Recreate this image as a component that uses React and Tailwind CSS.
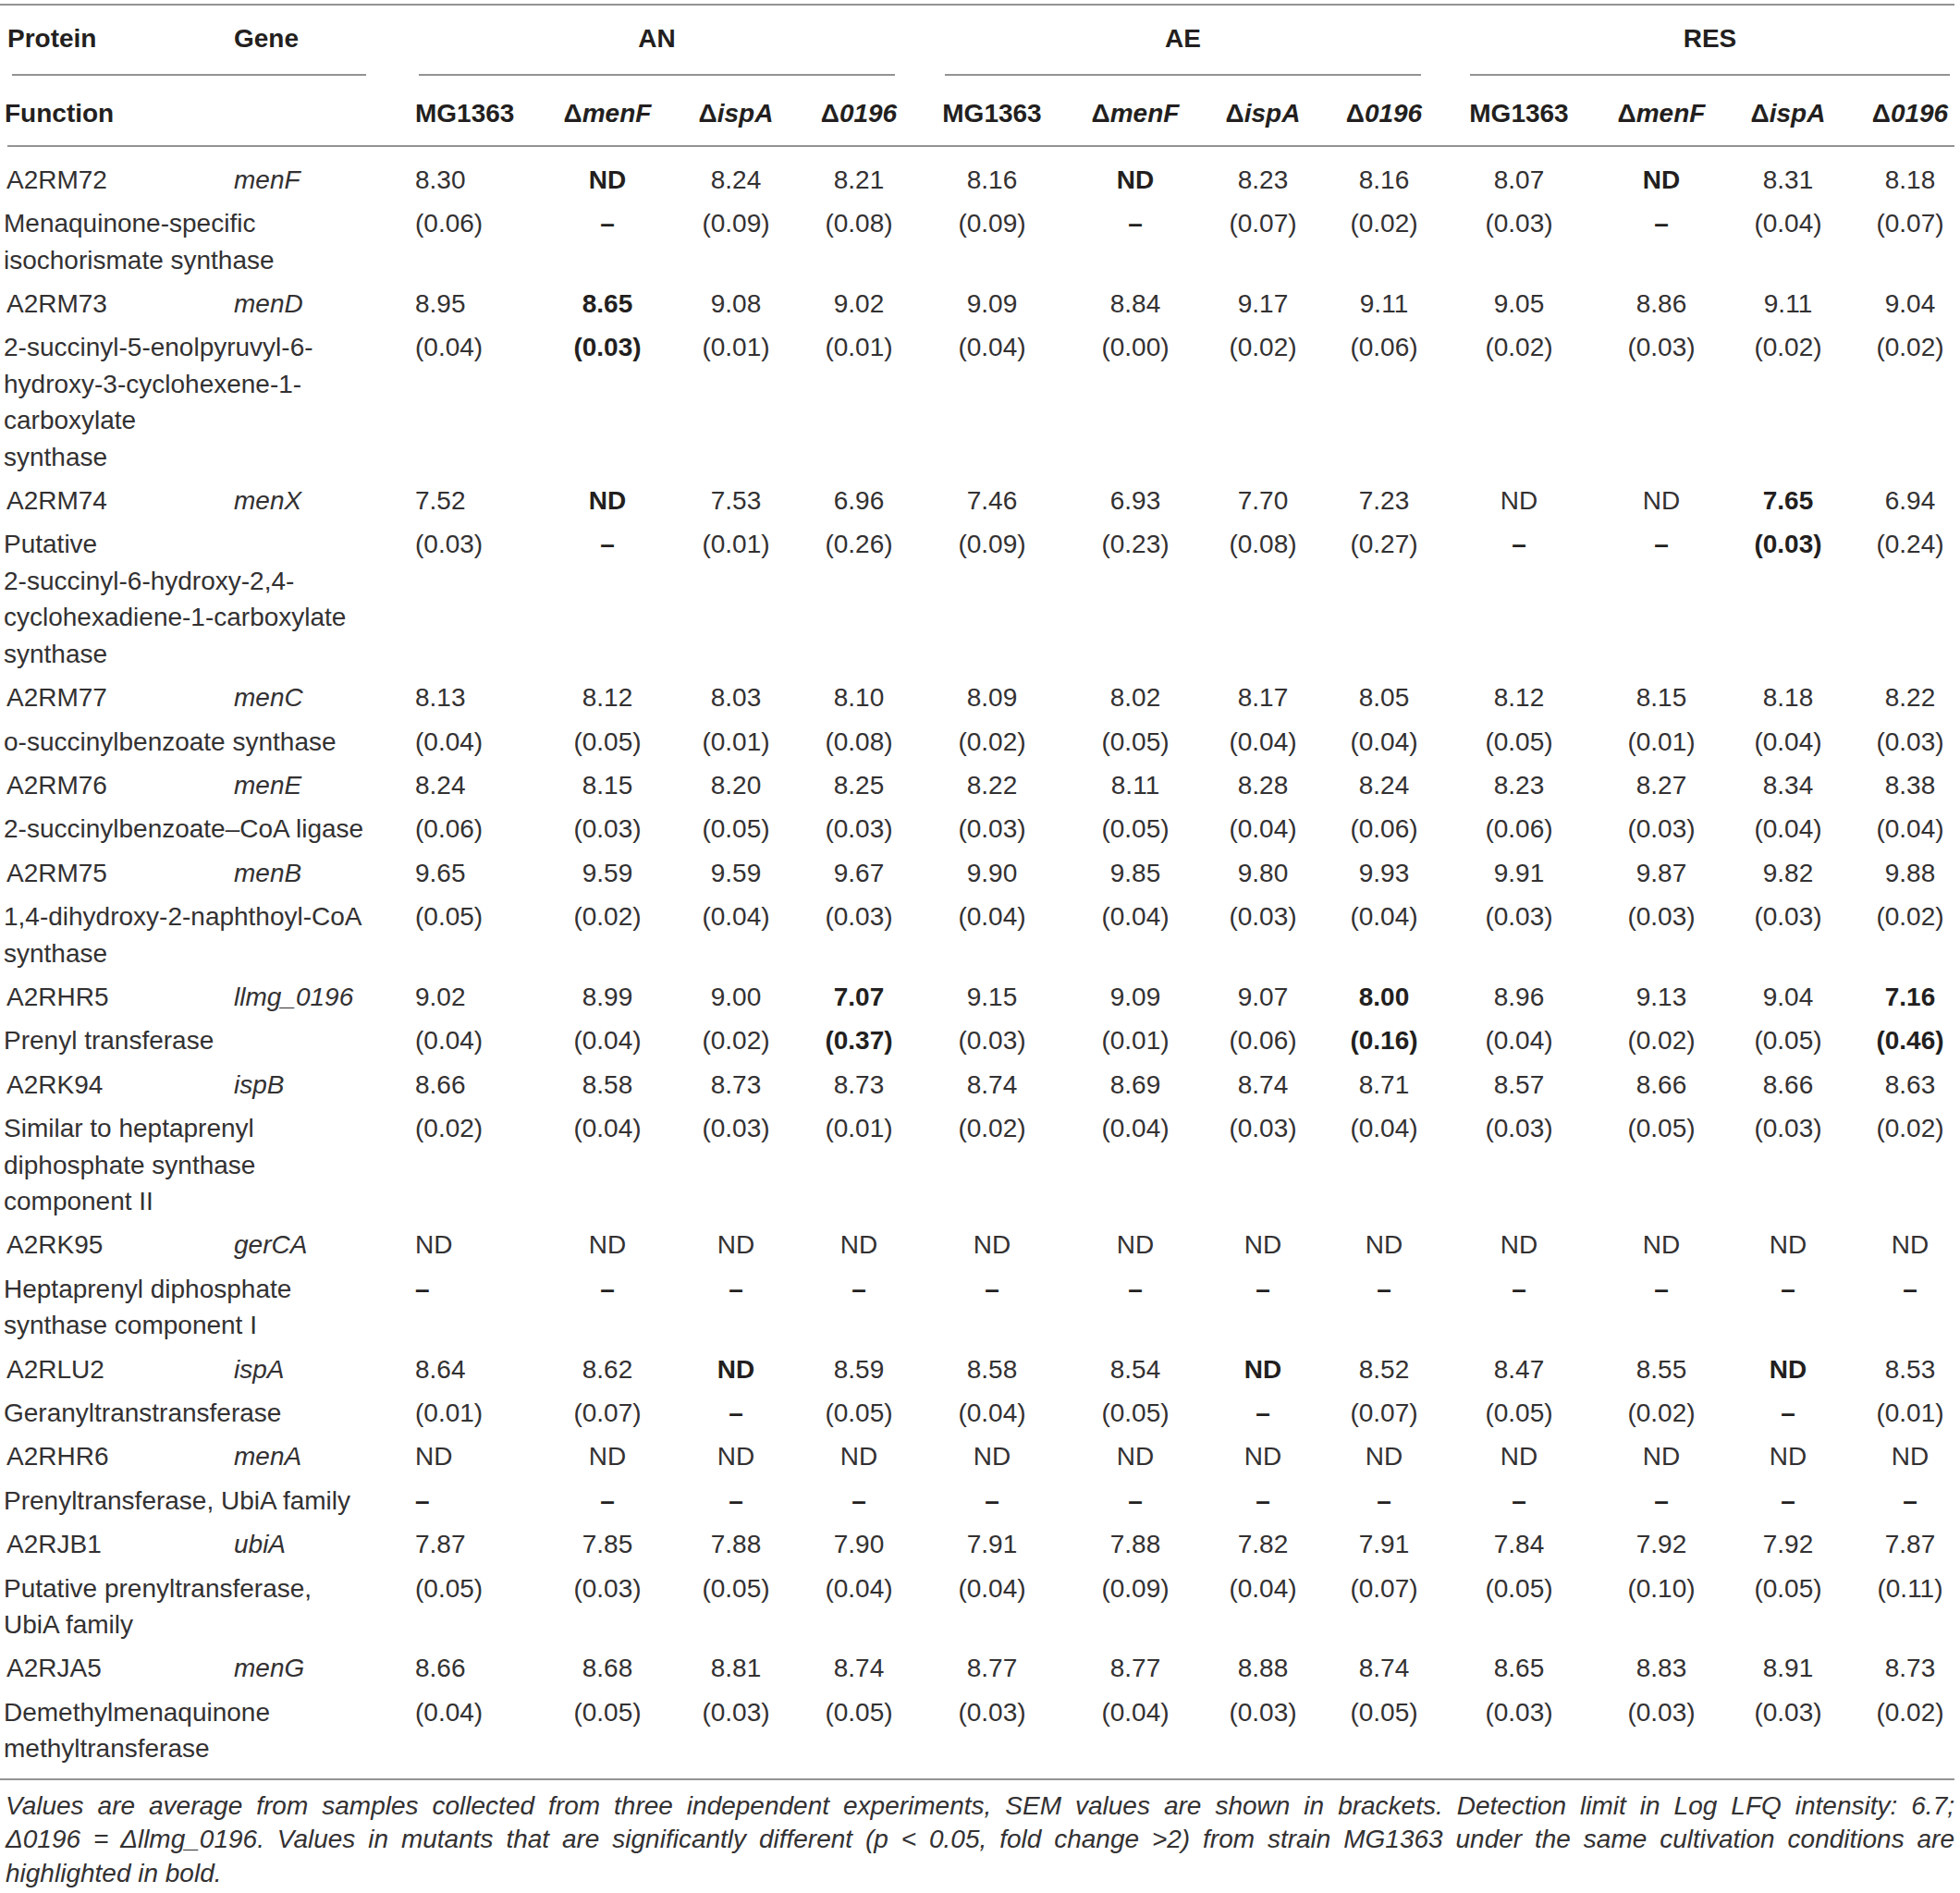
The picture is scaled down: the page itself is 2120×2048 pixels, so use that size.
import React from "react";

const GRID =
  "grid grid-cols-[249px_196px_141px_134px_144px_122px_166px_144px_132px_130px_162px_146px_128px_122px]";

const ALIGN = [
  "text-left",
  "text-center",
  "text-center",
  "text-center",
  "text-center",
  "text-center",
  "text-center",
  "text-center",
  "text-center",
  "text-center",
  "text-center",
  "text-center pl-[14px]",
];

const rows = [
  {
    id: "A2RM72",
    gene: "menF",
    fn: ["Menaquinone-specific", "isochorismate synthase"],
    vals: "8.30 *ND 8.24 8.21 8.16 *ND 8.23 8.16 8.07 *ND 8.31 8.18",
    sems: "(0.06) – (0.09) (0.08) (0.09) – (0.07) (0.02) (0.03) – (0.04) (0.07)",
  },
  {
    id: "A2RM73",
    gene: "menD",
    fn: ["2-succinyl-5-enolpyruvyl-6-", "hydroxy-3-cyclohexene-1-", "carboxylate", "synthase"],
    vals: "8.95 *8.65 9.08 9.02 9.09 8.84 9.17 9.11 9.05 8.86 9.11 9.04",
    sems: "(0.04) *(0.03) (0.01) (0.01) (0.04) (0.00) (0.02) (0.06) (0.02) (0.03) (0.02) (0.02)",
  },
  {
    id: "A2RM74",
    gene: "menX",
    fn: ["Putative", "2-succinyl-6-hydroxy-2,4-", "cyclohexadiene-1-carboxylate", "synthase"],
    vals: "7.52 *ND 7.53 6.96 7.46 6.93 7.70 7.23 ND ND *7.65 6.94",
    sems: "(0.03) – (0.01) (0.26) (0.09) (0.23) (0.08) (0.27) – – *(0.03) (0.24)",
  },
  {
    id: "A2RM77",
    gene: "menC",
    fn: ["o-succinylbenzoate synthase"],
    vals: "8.13 8.12 8.03 8.10 8.09 8.02 8.17 8.05 8.12 8.15 8.18 8.22",
    sems: "(0.04) (0.05) (0.01) (0.08) (0.02) (0.05) (0.04) (0.04) (0.05) (0.01) (0.04) (0.03)",
  },
  {
    id: "A2RM76",
    gene: "menE",
    fn: ["2-succinylbenzoate–CoA ligase"],
    vals: "8.24 8.15 8.20 8.25 8.22 8.11 8.28 8.24 8.23 8.27 8.34 8.38",
    sems: "(0.06) (0.03) (0.05) (0.03) (0.03) (0.05) (0.04) (0.06) (0.06) (0.03) (0.04) (0.04)",
  },
  {
    id: "A2RM75",
    gene: "menB",
    fn: ["1,4-dihydroxy-2-naphthoyl-CoA", "synthase"],
    vals: "9.65 9.59 9.59 9.67 9.90 9.85 9.80 9.93 9.91 9.87 9.82 9.88",
    sems: "(0.05) (0.02) (0.04) (0.03) (0.04) (0.04) (0.03) (0.04) (0.03) (0.03) (0.03) (0.02)",
  },
  {
    id: "A2RHR5",
    gene: "llmg_0196",
    fn: ["Prenyl transferase"],
    vals: "9.02 8.99 9.00 *7.07 9.15 9.09 9.07 *8.00 8.96 9.13 9.04 *7.16",
    sems: "(0.04) (0.04) (0.02) *(0.37) (0.03) (0.01) (0.06) *(0.16) (0.04) (0.02) (0.05) *(0.46)",
  },
  {
    id: "A2RK94",
    gene: "ispB",
    fn: ["Similar to heptaprenyl", "diphosphate synthase", "component II"],
    vals: "8.66 8.58 8.73 8.73 8.74 8.69 8.74 8.71 8.57 8.66 8.66 8.63",
    sems: "(0.02) (0.04) (0.03) (0.01) (0.02) (0.04) (0.03) (0.04) (0.03) (0.05) (0.03) (0.02)",
  },
  {
    id: "A2RK95",
    gene: "gerCA",
    fn: ["Heptaprenyl diphosphate", "synthase component I"],
    vals: "ND ND ND ND ND ND ND ND ND ND ND ND",
    sems: "– – – – – – – – – – – –",
  },
  {
    id: "A2RLU2",
    gene: "ispA",
    fn: ["Geranyltranstransferase"],
    vals: "8.64 8.62 *ND 8.59 8.58 8.54 *ND 8.52 8.47 8.55 *ND 8.53",
    sems: "(0.01) (0.07) – (0.05) (0.04) (0.05) – (0.07) (0.05) (0.02) – (0.01)",
  },
  {
    id: "A2RHR6",
    gene: "menA",
    fn: ["Prenyltransferase, UbiA family"],
    vals: "ND ND ND ND ND ND ND ND ND ND ND ND",
    sems: "– – – – – – – – – – – –",
  },
  {
    id: "A2RJB1",
    gene: "ubiA",
    fn: ["Putative prenyltransferase,", "UbiA family"],
    vals: "7.87 7.85 7.88 7.90 7.91 7.88 7.82 7.91 7.84 7.92 7.92 7.87",
    sems: "(0.05) (0.03) (0.05) (0.04) (0.04) (0.09) (0.04) (0.07) (0.05) (0.10) (0.05) (0.11)",
  },
  {
    id: "A2RJA5",
    gene: "menG",
    fn: ["Demethylmenaquinone", "methyltransferase"],
    vals: "8.66 8.68 8.81 8.74 8.77 8.77 8.88 8.74 8.65 8.83 8.91 8.73",
    sems: "(0.04) (0.05) (0.03) (0.05) (0.03) (0.04) (0.03) (0.05) (0.03) (0.03) (0.03) (0.02)",
  },
];

const Value = ({ v, i }) => {
  const bold = v.startsWith("*") || v === "–";
  return (
    <div
      className={`${ALIGN[i]} whitespace-nowrap ${bold ? "font-bold text-[#231f20]" : ""}`}
    >
      {v.replace("*", "")}
    </div>
  );
};

const Strain = ({ name, i }) => {
  if (name === "MG1363") return <div className={ALIGN[i]}>MG1363</div>;
  return (
    <div className={`${ALIGN[i]} whitespace-nowrap`}>
      Δ<span className="italic">{name}</span>
    </div>
  );
};

const Group = ({ label, className }) => (
  <div className={`col-span-4 flex flex-col ${className}`}>
    <div className="pt-[16px] pb-[19px] text-center">{label}</div>
    <div className="h-[2px] bg-[#939393]" />
  </div>
);

export default function App() {
  const strains = ["MG1363", "menF", "ispA", "0196"];

  return (
    <div className="w-[2120px] bg-white text-[28px] leading-[39.4px] text-[#333132] font-['Liberation_Sans',Arial,sans-serif]">
      <div className="mt-[4px] mr-[6px] h-[2px] bg-[#939393]" />

      <div className="font-bold text-[#231f20]">
        <div className={`${GRID} pl-[4px]`}>
          <div className="col-span-2 flex flex-col">
            <div className="grid grid-cols-[249px_196px] pt-[16px] pb-[19px]">
              <div className="pl-[4px]">Protein</div>
              <div>Gene</div>
            </div>
            <div className="ml-[9px] mr-[53px] h-[2px] bg-[#939393]" />
          </div>
          <Group label="AN" className="ml-[4px] mr-[22px]" />
          <Group label="AE" className="ml-[32px] mr-[25px]" />
          <Group label="RES" className="ml-[28px] mr-[11px]" />
        </div>

        <div className={`${GRID} pl-[4px] pt-[21px] pb-[14px]`}>
          <div className="col-span-2 pl-[1px]">Function</div>
          {[0, 1, 2].flatMap((g) =>
            strains.map((s, k) => <Strain key={`${g}-${s}`} name={s} i={g * 4 + k} />)
          )}
        </div>
      </div>

      <div className="ml-[8px] mr-[6px] h-[2px] bg-[#939393]" />

      <div className="pt-[12px] pb-[8px]">
        {rows.map((r) => (
          <div key={r.id}>
            <div className={`${GRID} pl-[4px] py-1`}>
              <div className="pl-[3px]">{r.id}</div>
              <div className="italic">{r.gene}</div>
              {r.vals.split(" ").map((v, i) => (
                <Value key={`v${i}`} v={v} i={i} />
              ))}
            </div>
            <div className={`${GRID} pl-[4px] py-1`}>
              <div className="col-span-2 whitespace-nowrap">
                {r.fn.map((line) => (
                  <div key={line}>{line}</div>
                ))}
              </div>
              {r.sems.split(" ").map((v, i) => (
                <Value key={`s${i}`} v={v} i={i} />
              ))}
            </div>
          </div>
        ))}
      </div>

      <div className="mr-[6px] h-[2px] bg-[#939393]" />

      <div className="px-[6px] pt-[10px] italic leading-[36.5px]">
        <p className="text-justify [text-align-last:justify]">
          Values are average from samples collected from three independent experiments, SEM values
          are shown in brackets. Detection limit in Log LFQ intensity: 6.7;
        </p>
        <p className="text-justify [text-align-last:justify]">
          Δ0196 = Δllmg_0196. Values in mutants that are significantly different (p &lt; 0.05, fold
          change &gt;2) from strain MG1363 under the same cultivation conditions are
        </p>
        <p>highlighted in bold.</p>
      </div>
    </div>
  );
}
